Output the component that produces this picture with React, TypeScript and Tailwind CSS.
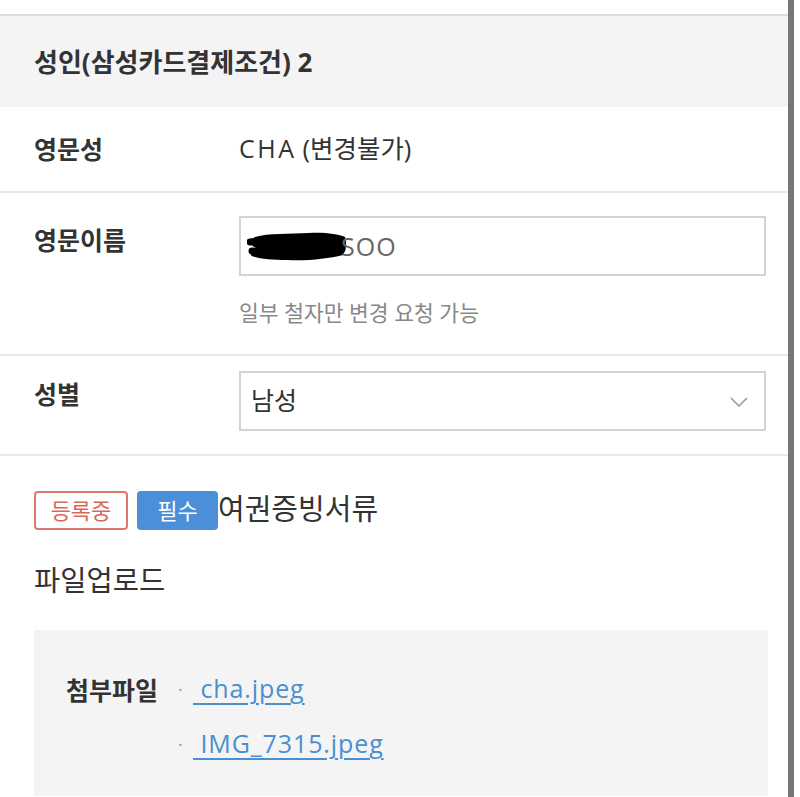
import React from "react";

function Scribble() {
  return (
    <svg width="100" height="36" viewBox="0 0 100 36" className="shrink-0 -mr-[6px] -ml-[2px]">
      <path
        d="M8 9 C22 5, 42 6, 62 5 C77 4, 91 6, 98 9 C100 15, 99 22, 96 27 C80 31, 60 33, 40 32 C25 32, 12 31, 5 28 C1 25, 3 22, 9 20 C3 17, 2 13, 8 9 Z"
        fill="#000"
      />
      <path d="M3 14 C20 12, 50 12, 92 13" stroke="#000" strokeWidth="7" fill="none" strokeLinecap="round" />
      <path d="M5 23 C30 24, 60 24, 95 21" stroke="#000" strokeWidth="7" fill="none" strokeLinecap="round" />
    </svg>
  );
}

export default function App() {
  return (
    <div
      className="w-[800px] h-[797px] overflow-hidden bg-white flex text-[#333]"
      style={{ fontFamily: '"Open Sans", "Noto Sans CJK KR", sans-serif' }}
    >
      <div className="w-[788px] shrink-0 flex flex-col">
        <div className="h-[14px] border-b-2 border-[#dcdcdc] box-content" />
        <div className="h-[91px] bg-[#f4f4f4] flex items-center px-[34px]">
          <span className="text-[26px] font-bold leading-none">성인(삼성카드결제조건) 2</span>
        </div>

        <div className="h-[84px] flex items-center px-[34px] border-b-2 border-[#e8e8e8] box-content">
          <div className="w-[205px] text-[25px] font-bold leading-none">영문성</div>
          <div className="leading-none flex items-baseline">
            <span className="text-[25px] tracking-[2.5px]">CHA</span>
            <span className="ml-[6px] text-[25.5px]">(변경불가)</span>
          </div>
        </div>

        <div className="flex pl-[34px] pr-[22px] pt-[23px] pb-[30px] border-b-2 border-[#e8e8e8]">
          <div className="w-[205px] h-[60px] flex items-center text-[25px] font-bold leading-none -mt-[6px]">영문이름</div>
          <div className="flex-1">
            <div className="h-[60px] border-2 border-[#d4d4d4] flex items-center pl-[8px]">
              <Scribble />
              <span className="text-[25px] text-[#666] leading-none tracking-[1px]">SOO</span>
            </div>
            <div className="mt-[26px] text-[21.5px] text-[#888] leading-none">일부 철자만 변경 요청 가능</div>
          </div>
        </div>

        <div className="flex pl-[34px] pr-[22px] pt-[15px] pb-[23px] border-b-2 border-[#e8e8e8]">
          <div className="w-[205px] h-[60px] flex items-center text-[25px] font-bold leading-none -mt-[6px]">성별</div>
          <div className="flex-1">
            <div className="h-[60px] border-2 border-[#d4d4d4] flex items-center justify-between pl-[10px] pr-[16px]">
              <span className="text-[25px] leading-none">남성</span>
              <svg width="18" height="10" viewBox="0 0 18 10" className="mt-[2px]">
                <polyline points="1,1 9,9 17,1" fill="none" stroke="#9a9a9a" strokeWidth="1.6" />
              </svg>
            </div>
          </div>
        </div>

        <div className="px-[34px] pt-[35px] flex items-center">
          <div className="w-[94px] h-[39px] border-2 border-[#e0776b] rounded-[4px] flex items-center justify-center text-[22px] text-[#d9685c] leading-none">
            등록중
          </div>
          <div className="ml-[9px] w-[81px] h-[39px] bg-[#4a8fd8] rounded-[4px] flex items-center justify-center text-[22px] text-white leading-none">
            필수
          </div>
          <span className="text-[29px] leading-none -mt-[4px]">여권증빙서류</span>
        </div>

        <div className="px-[34px] mt-[36px] text-[28.5px] leading-none">파일업로드</div>

        <div className="ml-[34px] w-[734px] mt-[36px] bg-[#f4f4f4] pt-[46px] pb-[40px] pl-[32px] flex">
          <div className="w-[112px] text-[25px] font-bold leading-none pt-[2px]">첨부파일</div>
          <div className="flex flex-col gap-[30px]">
            {["cha.jpeg", "IMG_7315.jpeg"].map((f) => (
              <div key={f} className="flex items-center leading-none">
                <span className="w-[15px] text-[#999] text-[18px]">·</span>
                <a className="text-[25px] text-[#4a8fd0] underline underline-offset-[5px] decoration-[1.5px] whitespace-pre tracking-[0.9px]">
                  {" " + f}
                </a>
              </div>
            ))}
          </div>
        </div>
      </div>
      <div className="w-[6px] bg-[#767676] shrink-0" />
      <div className="flex-1 bg-white" />
    </div>
  );
}
